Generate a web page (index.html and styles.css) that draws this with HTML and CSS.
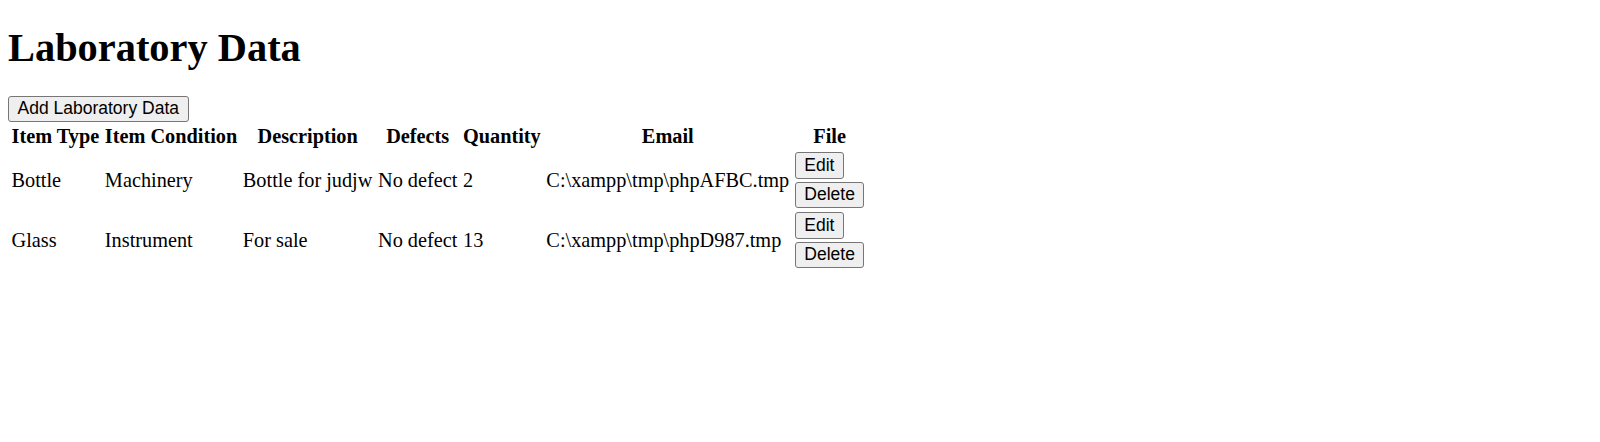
FILE: index.html
```html
<!DOCTYPE html>
<html>
<head>
<meta charset="utf-8">
<title>Laboratory Data</title>
<link rel="stylesheet" href="styles.css">
</head>
<body>
<h1 class="title">Laboratory Data</h1>
<button class="btn">Add Laboratory Data</button>
<table class="data">
  <thead>
    <tr>
      <th>Item Type</th>
      <th>Item Condition</th>
      <th>Description</th>
      <th>Defects</th>
      <th>Quantity</th>
      <th>Email</th>
      <th>File</th>
    </tr>
  </thead>
  <tbody>
    <tr>
      <td>Bottle</td>
      <td>Machinery</td>
      <td>Bottle for judjw</td>
      <td>No defect</td>
      <td>2</td>
      <td>C:\xampp\tmp\phpAFBC.tmp</td>
      <td><div class="actions"><button class="btn">Edit</button><button class="btn">Delete</button></div></td>
    </tr>
    <tr>
      <td>Glass</td>
      <td>Instrument</td>
      <td>For sale</td>
      <td>No defect</td>
      <td>13</td>
      <td>C:\xampp\tmp\phpD987.tmp</td>
      <td><div class="actions"><button class="btn">Edit</button><button class="btn">Delete</button></div></td>
    </tr>
  </tbody>
</table>
</body>
</html>
```

FILE: styles.css
```css
body {
  margin: 0;
  padding: 8px;
  font-family: "Liberation Serif", "Times New Roman", serif;
  font-size: 20.3px;
  color: #000;
  background: #fff;
}
.title {
  font-size: 40.4px;
  font-weight: bold;
  margin: 15.5px 0 25px;
}
.btn {
  font-family: "Liberation Sans", Arial, sans-serif;
  font-size: 17.5px;
  padding: 1.6px 8.5px;
  border: 1px solid #767676;
  border-radius: 3px;
  background: #efefef;
  color: #000;
}
.data {
  border-spacing: 3px 2.5px;
  margin-left: -0.75px;
}
.data th, .data td {
  padding: 1.25px 1.3px;
}
.actions {
  display: flex;
  flex-direction: column;
  align-items: flex-start;
  gap: 3px;
}
```
